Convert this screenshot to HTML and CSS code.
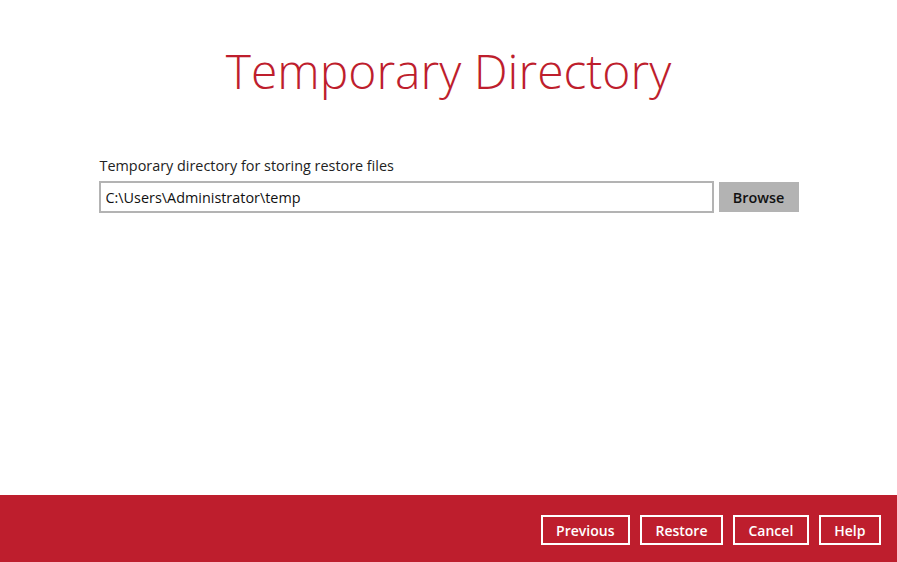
FILE: index.html
```html
<!DOCTYPE html>
<html lang="en">
<head>
<meta charset="UTF-8"/>
<title>Temporary Directory</title>
<link rel="stylesheet" href="styles.css">
</head>
<body>
<div class="app">
  <!-- Page content -->
  <div class="content">
    <h1 class="title">Temporary Directory</h1>
    <div class="field">
      <label class="field-label" for="tempDir">Temporary directory for storing restore files</label>
      <div class="field-row">
        <input class="path-input" id="tempDir" type="text" value="C:\Users\Administrator\temp">
        <button class="browse-btn">Browse</button>
      </div>
    </div>
  </div>

  <!-- Bottom bar -->
  <footer>
    <button class="nav-btn">Previous</button>
    <button class="nav-btn">Restore</button>
    <button class="nav-btn">Cancel</button>
    <button class="nav-btn">Help</button>
  </footer>
</div>
</body>
</html>
```

FILE: styles.css
```css
/* Global Setup */
html, body {
  margin:0; padding:0; width:100%; height:100%;
  background:#fff;
  font-family:"Open Sans", sans-serif;
  overflow:hidden;
}

.app {
  display:flex;
  flex-direction:column;
  width:100%;
  height:100%;
}

/* Content area */
.content {
  flex:1;
  display:flex;
  flex-direction:column;
  align-items:center;
}
.title {
  margin:36px 0 0;
  font-weight:300;
  font-size:48px;
  line-height:70px;
  color:#be1e2d;
}

.field {
  width:700px;
  margin-top:50px;
}
.field-label {
  display:block;
  font-size:14.4px;
  color:#222;
  margin-bottom:6px;
  padding-left:1px;
}
.field-row {
  display:flex;
  align-items:center;
  gap:5px;
}
.path-input {
  flex:1;
  height:32px;
  box-sizing:border-box;
  border:2px solid #b3b3b3;
  padding:0 5px;
  font-family:"Open Sans", sans-serif;
  font-size:14.4px;
  color:#111;
  outline:none;
}
.browse-btn {
  width:80px;
  height:30px;
  border:none;
  background:#b3b3b3;
  font-family:"Open Sans", sans-serif;
  font-size:14.4px;
  font-weight:600;
  color:#111;
}

/* Footer */
footer {
  height:67px;
  box-sizing:border-box;
  flex-shrink:0;
  background:#be1e2d;
  display:flex;
  align-items:center;
  justify-content:flex-end;
  gap:10px;
  padding:3px 16px 0;
}
.nav-btn {
  height:30px;
  padding:0 13.5px;
  background:transparent;
  border:2px solid #fff;
  color:#fff;
  font-family:"Open Sans", sans-serif;
  font-size:14px;
  font-weight:600;
}
```
